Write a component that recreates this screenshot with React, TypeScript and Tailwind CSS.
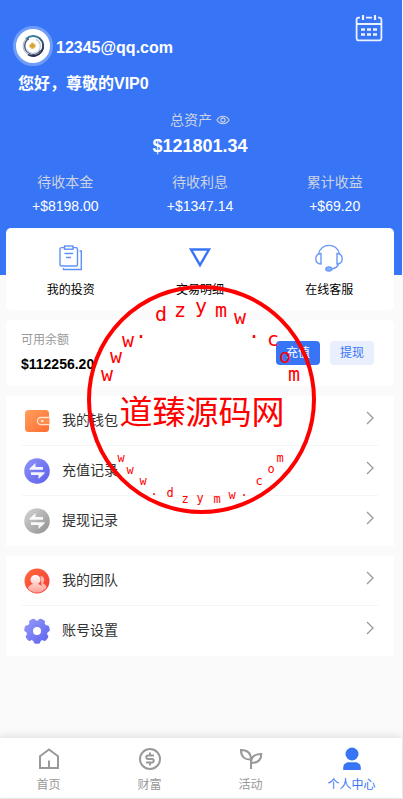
import type { ReactNode } from "react";

const BLUE = "#3875f6";

const stats = [
  { label: "待收本金", value: "+$8198.00" },
  { label: "待收利息", value: "+$1347.14" },
  { label: "累计收益", value: "+$69.20" },
];

function CalendarIcon() {
  return (
    <svg width="28" height="28" viewBox="0 0 28 28" fill="none" stroke="#fff" strokeWidth="1.8" opacity="0.9">
      <path d="M5 3.6H3.5A2 2 0 0 0 1.6 5.5V24.5A2 2 0 0 0 3.5 26.4H24.5A2 2 0 0 0 26.4 24.5V5.5A2 2 0 0 0 24.5 3.6H23M11 3.6H17M1.6 10H26.4" />
      <path d="M8 1V6M20 1V6" strokeWidth="2.2" />
      <path d="M6 15.5H10M12 15.5H16M18 15.5H22M6 20.5H10M12 20.5H16M18 20.5H22" strokeWidth="2.4" />
    </svg>
  );
}

function AvatarIcon() {
  return (
    <svg width="24" height="24" viewBox="0 0 24 24" fill="none">
      <defs>
        <linearGradient id="ring" x1="0" y1="0" x2="0.4" y2="1">
          <stop offset="0" stopColor="#3b8ca6" />
          <stop offset="1" stopColor="#2b2d52" />
        </linearGradient>
      </defs>
      <path d="M5 5A10 10 0 1 1 7 20.500" stroke="url(#ring)" strokeWidth="2" />
      <path d="M5 5A10 10 0 0 0 7 20.500" stroke="#9fb4c4" strokeWidth="1" />
      <path d="M8 4.600A8.400 8.400 0 1 0 19.500 16" stroke="#4d5675" strokeWidth="1.4" />
      <path d="M15 5.4A7.3 7.3 0 1 1 5.6 15.5" stroke="#c3c9d6" strokeWidth="1.2" />
      <path d="M10.3 8.8H12.7V10.2H14.4V13.4H12.7V14.8H10.3V13.4H8.6V10.2H10.3Z" fill="#d9a52f" />
    </svg>
  );
}

function EyeIcon() {
  return (
    <svg width="14" height="14" viewBox="0 0 14 14" fill="none" stroke="#ccd3e2" strokeWidth="1.1">
      <path d="M1 7C3.6 2 10.4 2 13 7C10.4 12 3.6 12 1 7Z" />
      <circle cx="7" cy="7" r="2.1" />
    </svg>
  );
}

function InvestIcon() {
  return (
    <svg width="28" height="28" viewBox="0 0 28 28" fill="none" stroke="#5f92f8" strokeWidth="1.4">
      <path d="M7.5 3.6H4.5A1.5 1.5 0 0 0 3 5.1V20.5A1.5 1.5 0 0 0 4.5 22H19A1.5 1.5 0 0 0 20.5 20.5V5.1A1.5 1.5 0 0 0 19 3.6H16" />
      <rect x="7.5" y="2" width="8.5" height="3.2" />
      <path d="M7.5 9.5H16M9 13.5H14M22.5 7H24.3V25.5H6.5V24" />
    </svg>
  );
}

function DetailIcon() {
  return (
    <svg width="28" height="28" viewBox="0 0 28 28" fill="none" stroke="#3875f6" strokeWidth="2.4">
      <path d="M5 5.5H23L14 21Z" />
    </svg>
  );
}

function ServiceIcon() {
  return (
    <svg width="28" height="28" viewBox="0 0 28 28" fill="none" stroke="#6a99f8" strokeWidth="1.4">
      <path d="M3.6 10C5.5 -1.5 22.500 -1.5 24.4 10" />
      <path d="M6 9.500V20C-1 19.500 -1 10 6 9.500ZM22 9.500V20C29 19.500 29 10 22 9.500Z" />
      <path d="M23.8 19C23 22.500 20.500 24.500 16.500 25" />
      <ellipse cx="13.8" cy="25" rx="3" ry="2" fill="#8db1fa" />
    </svg>
  );
}

function WalletIcon() {
  return (
    <svg width="26" height="26" viewBox="0 0 26 26">
      <defs>
        <linearGradient id="wallet" x1="0" y1="0" x2="1" y2="1">
          <stop offset="0" stopColor="#ffa05c" />
          <stop offset="1" stopColor="#ff6c31" />
        </linearGradient>
      </defs>
      <rect x="1" y="2" width="24" height="22" rx="3.5" fill="url(#wallet)" />
      <path d="M25.500 9.5H17A3.6 3.6 0 0 0 17 16.700H25.500" fill="#ff8d4e" stroke="#ffe0cc" strokeWidth="1.3" />
      <path d="M17 13H19.5" stroke="#fff" strokeWidth="1.6" />
    </svg>
  );
}

function SwapIcon({ id, from, to }: { id: string; from: string; to: string }) {
  return (
    <svg width="26" height="26" viewBox="0 0 26 26">
      <defs>
        <linearGradient id={id} x1="0" y1="0" x2="1" y2="1">
          <stop offset="0" stopColor={from} />
          <stop offset="1" stopColor={to} />
        </linearGradient>
      </defs>
      <circle cx="13" cy="13" r="12.8" fill={`url(#${id})`} />
      <path d="M5.5 10.500L11.500 5V9H19V11.800H5.500ZM20.500 15.500L14.500 21V17H7V14.200H20.500Z" fill="#fff" opacity="0.92" />
    </svg>
  );
}

function TeamIcon() {
  return (
    <svg width="26" height="26" viewBox="0 0 26 26">
      <defs>
        <linearGradient id="team" x1="0" y1="0" x2="1" y2="1">
          <stop offset="0" stopColor="#fd6a3c" />
          <stop offset="1" stopColor="#f73737" />
        </linearGradient>
        <linearGradient id="person" x1="0" y1="0" x2="0" y2="1">
          <stop offset="0" stopColor="#fff" />
          <stop offset="1" stopColor="#ff9a8f" />
        </linearGradient>
        <clipPath id="disc">
          <circle cx="13" cy="13" r="11.5" />
        </clipPath>
      </defs>
      <circle cx="13" cy="13" r="12.5" fill="url(#team)" />
      <g clipPath="url(#disc)">
        <path d="M16.5 8C20.5 8 21.5 13 18.800 15.300C21 16 23 18 23 21L18 22Z" fill="#ffb5a8" />
        <path d="M11.5 7A4.800 4.800 0 0 1 14 16C17.500 17 19.500 19 19.500 22.500C16 26.500 7.500 26.500 3.500 21.500C4 18.500 6 17 9 16A4.800 4.800 0 0 1 11.500 7Z" fill="url(#person)" />
      </g>
    </svg>
  );
}

function GearIcon() {
  return (
    <svg width="26" height="26" viewBox="0 0 26 26">
      <defs>
        <linearGradient id="gear" gradientUnits="userSpaceOnUse" x1="3" y1="3" x2="23" y2="23">
          <stop offset="0" stopColor="#9196fb" />
          <stop offset="1" stopColor="#6266ee" />
        </linearGradient>
        <clipPath id="teeth">
          <circle cx="13" cy="13" r="10.6" />
          {[0, 51, 103, 154, 206, 257, 309].map((a) => (
            <rect key={a} x="9.5" y="18" width="7" height="7.8" rx="2.4" transform={`rotate(${a} 13 13)`} />
          ))}
        </clipPath>
      </defs>
      <rect width="26" height="26" fill="url(#gear)" clipPath="url(#teeth)" />
      <circle cx="13" cy="13" r="4" fill="#fff" />
    </svg>
  );
}

function HomeIcon() {
  return (
    <svg width="24" height="24" viewBox="0 0 24 24" fill="none" stroke="#999" strokeWidth="2">
      <path d="M3 9.2L12 2.500L21 9.200V21H3ZM12 13.500V21" />
    </svg>
  );
}

function MoneyIcon() {
  return (
    <svg width="24" height="24" viewBox="0 0 24 24" fill="none" stroke="#999" strokeWidth="2">
      <circle cx="12" cy="12" r="10" />
      <path d="M16 8.5H10A1.75 1.75 0 0 0 10 12H14A1.75 1.75 0 0 1 14 15.500H8M12 5.500V8.500M12 15.500V18.500" />
    </svg>
  );
}

function PlantIcon() {
  return (
    <svg width="24" height="24" viewBox="0 0 24 24" fill="none" stroke="#999" strokeWidth="2">
      <path d="M12 22V12.5C5.500 13 2 9.500 2 3C9 3 12 6 12 12.500M12 16C12 10 15.500 7 22.300 7C22.300 13 18.500 16 12 16" />
    </svg>
  );
}

function UserIcon() {
  return (
    <svg width="24" height="24" viewBox="0 0 24 24" fill={BLUE}>
      <circle cx="12" cy="7" r="6.5" />
      <path d="M3.200 23V21C3.200 17.500 5.500 15.300 9 15.300H15C18.500 15.300 20.800 17.500 20.800 21V23Z" />
    </svg>
  );
}

function MenuItem({ icon, label }: { icon: ReactNode; label: string }) {
  return (
    <a href="#" className="flex flex-1 flex-col items-center gap-2 text-xs leading-5 text-black">
      {icon}
      <span>{label}</span>
    </a>
  );
}

function Row({ icon, label }: { icon: ReactNode; label: string }) {
  return (
    <li className="border-b border-[#f5f5f5] last:border-b-0">
      <a href="#" className="flex h-[49px] items-center gap-3 pl-0.5 pr-1 text-sm text-[#333]">
        {icon}
        <span className="flex-1 pb-0.5">{label}</span>
        <svg width="8" height="14" viewBox="0 0 8 14" fill="none" stroke="#999" strokeWidth="1.3" className="mb-1.5">
          <path d="M1 1L7 7L1 13" />
        </svg>
      </a>
    </li>
  );
}

function Tab({ icon, label, active }: { icon: ReactNode; label: string; active?: boolean }) {
  return (
    <a
      href="#"
      className={`flex flex-1 flex-col items-center gap-1 text-xs leading-5 ${active ? "text-[#3875f6]" : "text-[#999]"}`}
    >
      {icon}
      <span>{label}</span>
    </a>
  );
}

type Mark = [string, number, number];

const topMarks: Mark[] = [
  ["w", 107, 381], ["w", 116, 363], ["w", 128, 347], [".", 141, 338],
  ["d", 161, 321], ["z", 180, 317], ["y", 201, 313], ["m", 221, 317],
  ["w", 240, 324], [".", 254, 338], ["c", 273, 346], ["o", 285, 363], ["m", 294, 381],
];

const bottomMarks: Mark[] = [
  ["w", 121, 462], ["w", 130, 474], ["w", 143, 485], [".", 154, 495],
  ["d", 170, 497], ["z", 185, 503], ["y", 200, 502], ["m", 217, 503],
  ["w", 232, 499], [".", 244, 496], ["c", 259, 485], ["o", 271, 473], ["m", 280, 462],
];

// round red stamp lying over the page
function Stamp() {
  return (
    <svg
      viewBox="86 284 231 231"
      className="pointer-events-none absolute left-[88px] top-[284px] size-[231px]"
      fill="#f00"
      textAnchor="middle"
    >
      <circle cx="201.5" cy="399.5" r="112.5" fill="none" stroke="#f00" strokeWidth="4" />
      <g fontFamily="'DejaVu Sans Mono', monospace" fontSize="20">
        {topMarks.map(([c, x, y]) => (
          <text key={x} x={x} y={y}>{c}</text>
        ))}
      </g>
      <g fontFamily="'DejaVu Sans Mono', monospace" fontSize="12">
        {bottomMarks.map(([c, x, y]) => (
          <text key={x} x={x} y={y}>{c}</text>
        ))}
      </g>
      <text x="202" y="424" fontFamily="'Noto Sans CJK SC', sans-serif" fontSize="33">道臻源码网</text>
    </svg>
  );
}

export default function App() {
  return (
    <div className="min-h-screen overflow-hidden bg-[#f5f5f5] font-['Liberation_Sans','Noto_Sans_CJK_SC',sans-serif]">
      <div className="relative -ml-0.5 mr-px flex min-h-[calc(100vh-1px)] flex-col bg-[#fafafa]">
        <header className="h-[275px] bg-[#3875f6] text-white">
          <div className="flex items-start justify-between pl-[15px] pr-[19px] pt-3.5">
            <div className="flex items-center gap-[3px] pt-3 font-bold">
              <div className="flex size-10 items-center justify-center rounded-full border-3 border-[#6f9cf9] bg-white">
                <AvatarIcon />
              </div>
              <span className="pt-1">12345@qq.com</span>
            </div>
            <button type="button" aria-label="calendar">
              <CalendarIcon />
            </button>
          </div>
          <p className="mt-0.5 pl-5 font-bold leading-8">您好，尊敬的VIP0</p>

          <div className="mt-2 text-center">
            <div className="flex items-center justify-center gap-1 text-sm leading-6 text-[#ccd3e2]">
              总资产
              <EyeIcon />
            </div>
            <p className="text-lg font-bold leading-7">$121801.34</p>
          </div>
          <dl className="mt-2.5 flex text-center text-sm">
            {stats.map((s) => (
              <div key={s.label} className="flex-1">
                <dt className="leading-6 text-[#ccd3e2]">{s.label}</dt>
                <dd className="leading-6">{s.value}</dd>
              </div>
            ))}
          </dl>
        </header>

        <main className="-mt-[47px] flex flex-1 flex-col gap-2.5 px-2">
          <nav className="flex h-[82px] rounded-[5px] bg-white pt-4">
            <MenuItem icon={<InvestIcon />} label="我的投资" />
            <MenuItem icon={<DetailIcon />} label="交易明细" />
            <MenuItem icon={<ServiceIcon />} label="在线客服" />
          </nav>

          <section className="flex h-[66px] items-center rounded-[5px] bg-white pl-[15px] pr-5">
            <div className="flex-1 pb-0.5">
              <p className="text-xs leading-6 text-[#999]">可用余额</p>
              <p className="text-sm font-bold leading-6 text-black">$112256.20</p>
            </div>
            <div className="flex gap-2.5 text-xs">
              <button type="button" className="h-6 w-11 rounded-[4px] bg-[#3875f6] text-white">充值</button>
              <button type="button" className="h-6 w-11 rounded-[4px] bg-[#e9effc] text-[#3875f6]">提现</button>
            </div>
          </section>

          <ul className="bg-white px-4 pb-px">
            <Row icon={<WalletIcon />} label="我的钱包" />
            <Row icon={<SwapIcon id="recharge" from="#9094fb" to="#5c5fe9" />} label="充值记录" />
            <Row icon={<SwapIcon id="withdraw" from="#d6d6d6" to="#8f8f8f" />} label="提现记录" />
          </ul>

          <ul className="bg-white px-4 pb-px">
            <Row icon={<TeamIcon />} label="我的团队" />
            <Row icon={<GearIcon />} label="账号设置" />
          </ul>
        </main>

        <nav className="flex h-[60px] bg-white pt-[9px] shadow-[0_0_10px_rgba(0,0,0,0.15)]">
          <Tab icon={<HomeIcon />} label="首页" />
          <Tab icon={<MoneyIcon />} label="财富" />
          <Tab icon={<PlantIcon />} label="活动" />
          <Tab icon={<UserIcon />} label="个人中心" active />
        </nav>

        <Stamp />
      </div>
    </div>
  );
}
